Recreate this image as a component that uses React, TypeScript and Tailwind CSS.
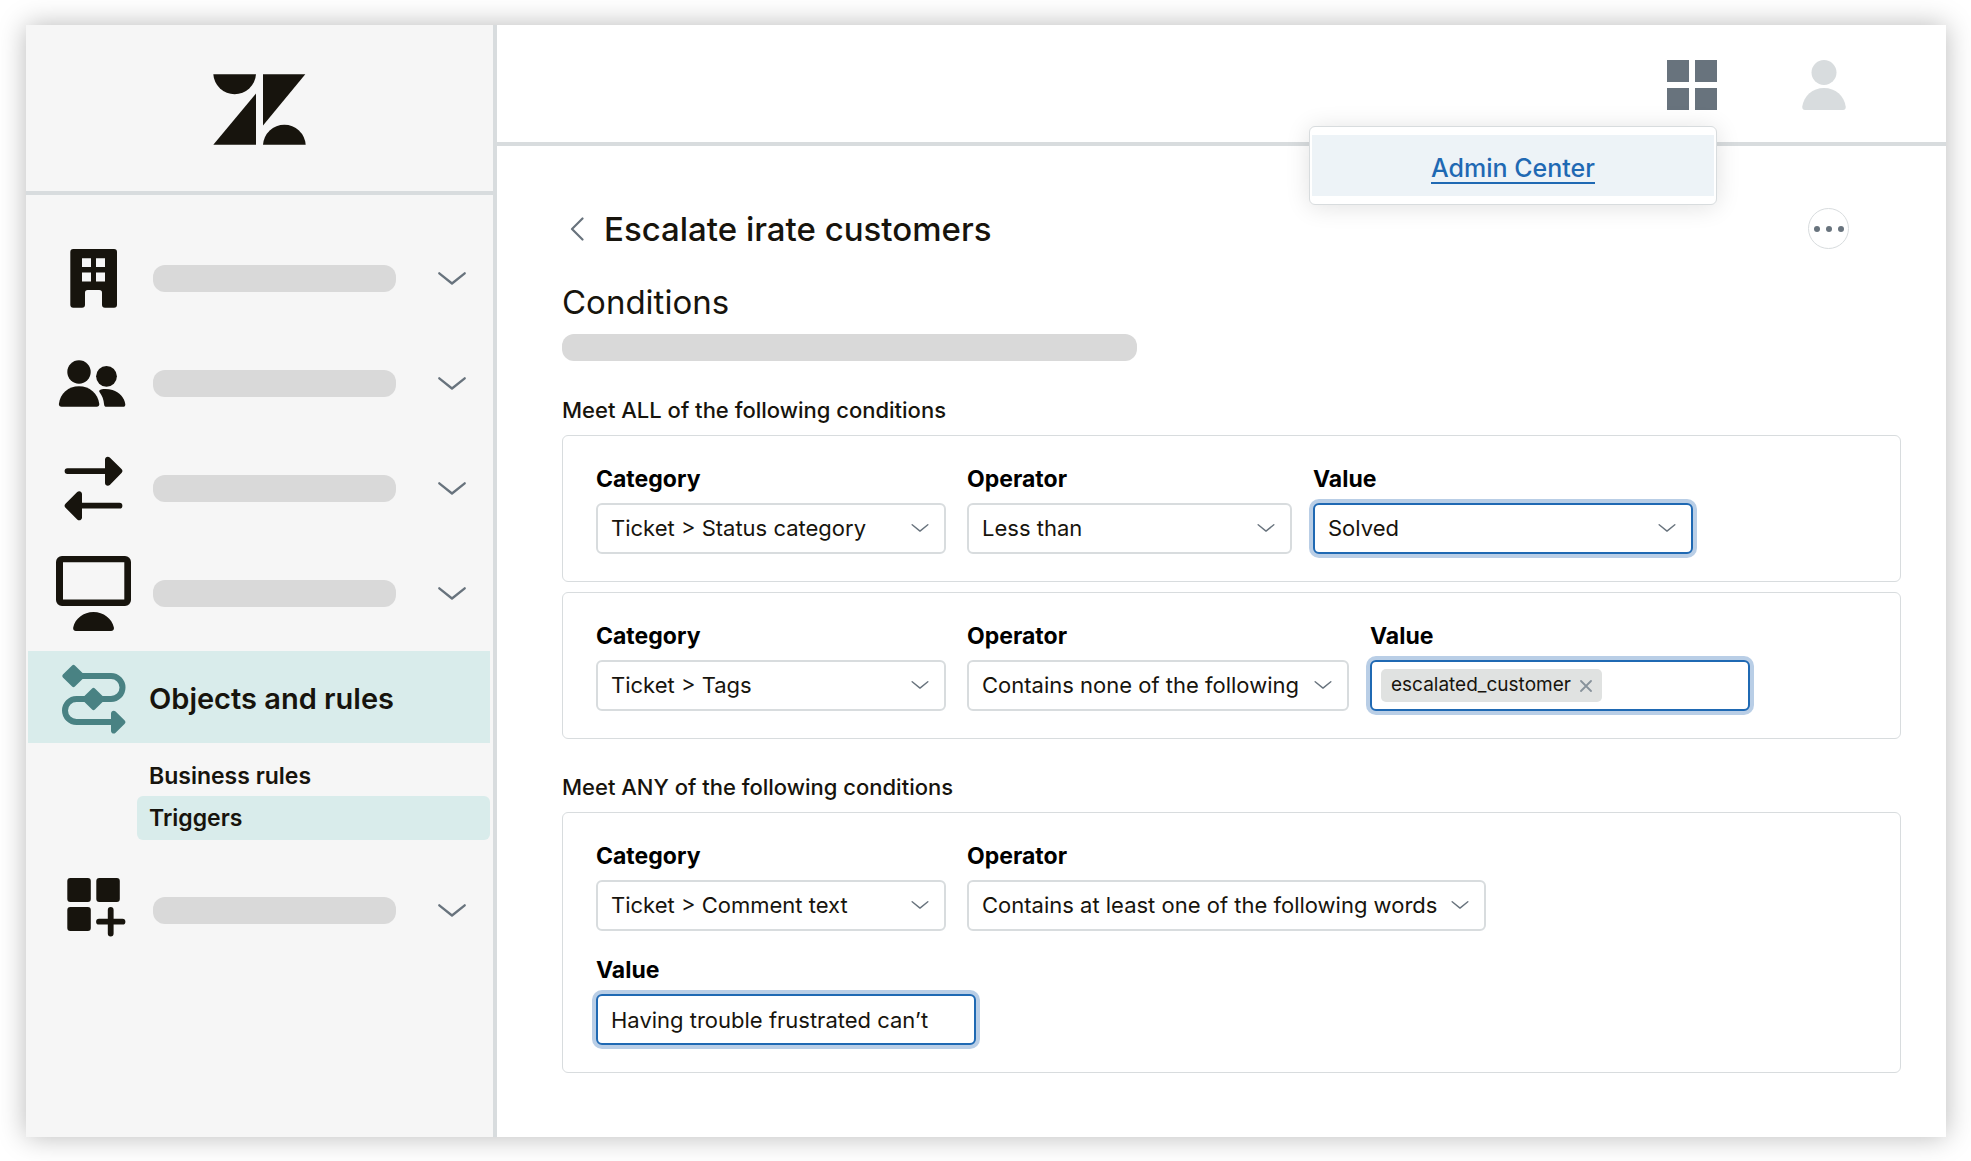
import React, { useState } from 'react';

type IconProps = { className?: string };

const Logo: React.FC<IconProps> = ({ className }) => (
  <svg viewBox="0 0 93 71" className={className} fill="currentColor" aria-hidden="true">
    <path d="M0.3 0.3H43A21.4 21.4 0 0 1 0.3 0.3Z" />
    <path d="M43 19.5V70.7H0.3Z" />
    <path d="M50 0.3H92.3L50 51.5Z" />
    <path d="M50 70.7A21.4 21.4 0 0 1 92.7 70.7Z" />
  </svg>
);

const BuildingIcon: React.FC<IconProps> = ({ className }) => (
  <svg viewBox="0 0 75 75" className={className} fill="currentColor" fillRule="evenodd" aria-hidden="true">
    <path d="M17.3 8H58a3 3 0 0 1 3 3V63.7a3 3 0 0 1-3 3H49a3 3 0 0 1-3-3V51.7a2.7 2.7 0 0 0-2.7-2.7H31.7a2.7 2.7 0 0 0-2.7 2.7V63.7a3 3 0 0 1-3 3H17.3a3 3 0 0 1-3-3V11a3 3 0 0 1 3-3ZM26 17.2V26H35V17.2ZM40 17.2V26H49V17.2ZM26 31.5V40.5H35V31.5ZM40 31.5V40.5H49V31.5Z" />
  </svg>
);

const PeopleIcon: React.FC<IconProps> = ({ className }) => (
  <svg viewBox="0 0 75 75" className={className} fill="currentColor" aria-hidden="true">
    <circle cx="23" cy="26" r="11.7" />
    <circle cx="50.5" cy="30.3" r="10.4" />
    <path d="M5.5 60.8C3.8 60.8 2.8 59.6 2.9 58C4 47.5 12.4 40.3 23 40.3S42 47.5 43.3 58C43.4 59.6 42.4 60.8 40.7 60.8Z" />
    <path d="M45 43.4C49 42.5 53 43 56.5 44.1C63.5 46.3 68.5 52 69.3 58.2C69.5 59.8 68.5 60.8 67 60.8H50.5C49 60.8 48.2 60 48.1 58.5C47.7 53.5 46.2 49.8 43.6 46.3C42.7 45 43.4 43.8 45 43.4Z" />
  </svg>
);

const ArrowsIcon: React.FC<IconProps> = ({ className }) => (
  <svg viewBox="0 0 75 75" className={className} fill="currentColor" aria-hidden="true">
    <path d="M11.5 17.2H49V8.5C49 5.9 52 4.7 53.8 6.5L65.5 18.1a2.9 2.9 0 0 1 0 4L53.8 34C52 35.7 49 34.5 49 32V23H11.5a2.9 2.9 0 0 1 0-5.8Z" />
    <path d="M63.5 51.8H26V43C26 40.4 23 39.2 21.2 41L9.5 52.7a2.9 2.9 0 0 0 0 4L21.2 68.5C23 70.3 26 69 26 66.5V57.6H63.5a2.9 2.9 0 0 0 0-5.8Z" />
  </svg>
);

const MonitorIcon: React.FC<IconProps> = ({ className }) => (
  <svg viewBox="0 0 75 75" className={className} fill="currentColor" fillRule="evenodd" aria-hidden="true">
    <path d="M6 0H69a6 6 0 0 1 6 6V44a6 6 0 0 1-6 6H6a6 6 0 0 1-6-6V6A6 6 0 0 1 6 0ZM7 6.2V43.6H68.3V6.2Z" />
    <path d="M20 75C18 75 16.8 73.5 17.2 71.5C19 62.5 27.5 56 37.5 56S56 62.5 57.9 71.5C58.3 73.5 57 75 55 75Z" />
  </svg>
);

const RulesIcon: React.FC<IconProps> = ({ className }) => (
  <svg viewBox="0 0 75 75" className={className} fill="none" aria-hidden="true">
    <path d="M24 16H55a11.5 11.5 0 0 1 0 23H20.5a11.5 11.5 0 0 0 0 23H57" stroke="currentColor" strokeWidth="6" />
    <g fill="currentColor">
      <rect x="9" y="7.5" width="17" height="17" rx="2" transform="rotate(45 17.5 16)" />
      <rect x="29" y="30.5" width="17" height="17" rx="2" transform="rotate(45 37.5 39)" />
      <path d="M55 53.5C55 50.9 57.8 49.7 59.6 51.5L68.5 60.2a2.7 2.7 0 0 1 0 3.8L59.6 72.7C57.8 74.5 55 73.3 55 70.7Z" />
    </g>
  </svg>
);

const AppsIcon: React.FC<IconProps> = ({ className }) => (
  <svg viewBox="0 0 75 75" className={className} fill="currentColor" aria-hidden="true">
    <rect x="11.3" y="5" width="23.5" height="24" rx="3" />
    <rect x="40.3" y="5" width="23.5" height="24" rx="3" />
    <rect x="11.3" y="34" width="23.5" height="24" rx="3" />
    <path d="M54.7 37V60.5M43 48.7H66.5" stroke="currentColor" strokeWidth="5.8" strokeLinecap="round" />
  </svg>
);

const ChevronDown: React.FC<IconProps> = ({ className }) => (
  <svg viewBox="0 0 28 13" className={className} fill="none" stroke="currentColor" strokeWidth="2.3" strokeLinecap="round" strokeLinejoin="round" aria-hidden="true">
    <path d="M1.3 1.3L14 11.5L26.7 1.3" />
  </svg>
);

interface NavRowProps {
  label: string;
  icon: React.FC<IconProps>;
}

const NavRow: React.FC<NavRowProps> = ({ label, icon: Icon }) => (
  <button type="button" aria-label={label} className="flex h-[105px] w-full items-center pl-[30px] pr-[27px]">
    <Icon className="h-[75px] w-[75px]" />
    <span className="ml-[22px] h-[27px] w-[243px] rounded-xl bg-[#d9d9d9]" />
    <ChevronDown className="ml-auto h-[13px] w-7 text-[#68737d]" />
  </button>
);

const Sidebar: React.FC = () => (
  <aside className="w-[471px] shrink-0 border-r-4 border-[#d8dcde] bg-[#f6f6f6] text-[#17140d]">
    <div className="flex h-[170px] items-center justify-center border-b-4 border-[#d8dcde] pt-[3px]">
      <Logo className="h-[71px] w-[93px]" />
    </div>
    <nav className="pt-[31px]">
      <NavRow label="Account" icon={BuildingIcon} />
      <NavRow label="People" icon={PeopleIcon} />
      <NavRow label="Channels" icon={ArrowsIcon} />
      <NavRow label="Workspaces" icon={MonitorIcon} />
      <div className="ml-[2px] mr-[3px] mt-[5px]">
        <button type="button" className="flex h-[92px] w-full items-center gap-[18px] bg-[#d9eceb] pl-7 text-[29px] font-semibold">
          <RulesIcon className="h-[75px] w-[75px] text-[#498283]" />
          <span className="pt-1">Objects and rules</span>
        </button>
        <div className="ml-[109px] mt-[13px] text-[23px] font-semibold">
          <a href="#business-rules" className="flex h-10 items-center pl-3">Business rules</a>
          <a href="#triggers" className="flex h-11 items-center rounded-md bg-[#d9eceb] pl-3">Triggers</a>
        </div>
      </div>
      <div className="mt-[18px]">
        <NavRow label="Apps and integrations" icon={AppsIcon} />
      </div>
    </nav>
  </aside>
);

const TopBar: React.FC = () => (
  <header className="flex h-[121px] items-start justify-end gap-[85px] border-b-4 border-[#d8dcde] pr-[100px] pt-[35px]">
    <div className="relative">
      <button type="button" aria-label="Products" className="block text-[#68737d]">
        <svg viewBox="0 0 50 50" className="h-[50px] w-[50px]" fill="currentColor" aria-hidden="true">
          <path d="M0 0H22V22H0ZM28 0H50V22H28ZM0 28H22V50H0ZM28 28H50V50H28Z" />
        </svg>
      </button>
      <div className="absolute right-0 top-full mt-4 w-[408px] rounded-md border border-[#d8dcde] bg-white px-[2px] py-2 shadow-[0_2px_24px_rgba(0,0,0,0.12)]">
        <div className="flex h-[61px] items-center justify-center bg-[#edf3f7] pt-[6px]">
          <a href="#admin" className="border-b-2 border-[#1f69b3] text-[25px] leading-7 font-medium text-[#1f69b3]">Admin Center</a>
        </div>
      </div>
    </div>
    <button type="button" aria-label="Profile" className="block text-[#d8dcde]">
      <svg viewBox="0 0 44 50" className="h-[50px] w-11" fill="currentColor" aria-hidden="true">
        <circle cx="22" cy="12.5" r="12.5" />
        <path d="M3 50C1 50 0 48.7 0.3 46.5C1.8 36 10.5 28 22 28S42.2 36 43.7 46.5C44 48.7 43 50 41 50Z" />
      </svg>
    </button>
  </header>
);

interface FieldProps {
  id: string;
  label: string;
  className: string;
  children: React.ReactNode;
}

const Field: React.FC<FieldProps> = ({ id, label, className, children }) => (
  <div className={className}>
    <label htmlFor={id} className="mb-[9px] block text-[23px] leading-[30px] font-bold text-black">{label}</label>
    {children}
  </div>
);

const boxStyle = 'h-[51px] w-full rounded-md border-2 bg-white text-[22px] outline-none';
const idleStyle = 'border-[#d8dcde]';
const focusStyle = 'border-[#1f69b3] ring-4 ring-[#b9cee6]';

interface SelectFieldProps {
  id: string;
  label: string;
  option: string;
  className: string;
  focused?: boolean;
}

const SelectField: React.FC<SelectFieldProps> = ({ id, label, option, className, focused }) => (
  <Field id={id} label={label} className={className}>
    <div className="relative">
      <select id={id} className={`appearance-none pl-[13px] pr-9 ${boxStyle} ${focused ? focusStyle : idleStyle}`}>
        <option>{option}</option>
      </select>
      <ChevronDown className="pointer-events-none absolute right-[17px] top-[21px] h-2 w-[18px] text-[#68737d]" />
    </div>
  </Field>
);

const TagField: React.FC = () => {
  const [tags, setTags] = useState(['escalated_customer']);

  return (
    <Field id="tags-value" label="Value" className="w-[380px]">
      <div className={`flex items-center pl-[9px] pr-2 ${boxStyle} ${focusStyle}`}>
        {tags.map((tag) => (
          <span key={tag} className="flex h-[33px] shrink-0 items-center gap-[9px] rounded-[5px] bg-[#e0e2e1] px-[10px] text-[19px]">
            {tag}
            <button type="button" aria-label={`Remove ${tag}`} onClick={() => setTags(tags.filter((t) => t !== tag))}>
              <svg viewBox="0 0 12 12" className="h-3 w-3 text-[#87929b]" fill="none" stroke="currentColor" strokeWidth="1.8" strokeLinecap="round" aria-hidden="true">
                <path d="M1 1L11 11M11 1L1 11" />
              </svg>
            </button>
          </span>
        ))}
        <input id="tags-value" type="text" className="min-w-0 flex-1 outline-none" />
      </div>
    </Field>
  );
};

const Card: React.FC<{ children: React.ReactNode }> = ({ children }) => (
  <div className="flex flex-wrap gap-x-[21px] gap-y-6 rounded-md border border-[#d8dcde] pb-[27px] pl-[33px] pr-8 pt-7">{children}</div>
);

const Trigger: React.FC = () => (
  <main className="pb-16 pl-[65px] pr-[45px] pt-[62px]">
    <div className="flex h-[41px] items-center">
      <a href="#triggers" aria-label="Back" className="ml-2 text-[#68737d]">
        <svg viewBox="0 0 14 24" className="h-6 w-[14px]" fill="none" stroke="currentColor" strokeWidth="2.2" strokeLinecap="round" strokeLinejoin="round" aria-hidden="true">
          <path d="M12.5 1.5L2 12L12.5 22.5" />
        </svg>
      </a>
      <h1 className="ml-5 text-[33px] leading-10 font-medium">Escalate irate customers</h1>
      <button type="button" aria-label="More actions" className="ml-auto mr-[52px] flex h-[41px] w-[41px] items-center justify-center gap-[6px] rounded-full border border-[#d8dcde]">
        <span className="h-[6px] w-[6px] rounded-full bg-[#68737d]" />
        <span className="h-[6px] w-[6px] rounded-full bg-[#68737d]" />
        <span className="h-[6px] w-[6px] rounded-full bg-[#68737d]" />
      </button>
    </div>

    <h2 className="mt-8 text-[33px] leading-[42px]">Conditions</h2>
    <div className="mt-[11px] h-[27px] w-[575px] rounded-xl bg-[#d9d9d9]" />

    <h3 className="mb-[10px] mt-[34px] text-[22px] leading-[30px] font-medium">Meet ALL of the following conditions</h3>
    <div className="flex flex-col gap-[10px]">
      <Card>
        <SelectField id="status-category" label="Category" option="Ticket > Status category" className="w-[350px]" />
        <SelectField id="status-operator" label="Operator" option="Less than" className="w-[325px]" />
        <SelectField id="status-value" label="Value" option="Solved" className="w-[380px]" focused />
      </Card>
      <Card>
        <SelectField id="tags-category" label="Category" option="Ticket > Tags" className="w-[350px]" />
        <SelectField id="tags-operator" label="Operator" option="Contains none of the following" className="w-[382px]" />
        <TagField />
      </Card>
    </div>

    <h3 className="mb-[10px] mt-[33px] text-[22px] leading-[30px] font-medium">Meet ANY of the following conditions</h3>
    <Card>
      <SelectField id="comment-category" label="Category" option="Ticket > Comment text" className="w-[350px]" />
      <SelectField id="comment-operator" label="Operator" option="Contains at least one of the following words" className="w-[519px]" />
      <div className="w-full">
        <Field id="comment-value" label="Value" className="w-[380px]">
          <input id="comment-value" type="text" defaultValue="Having trouble frustrated can’t" className={`px-[13px] ${boxStyle} ${focusStyle}`} />
        </Field>
      </div>
    </Card>
  </main>
);

const App: React.FC = () => (
  <div className="flex min-h-screen bg-white py-[25px] pl-[26px] pr-[25px] font-['Inter',sans-serif] text-[#17140d]">
    <div className="flex flex-1 bg-white shadow-[0_0_26px_rgba(0,0,0,0.28)]">
      <Sidebar />
      <div className="min-w-0 flex-1">
        <TopBar />
        <Trigger />
      </div>
    </div>
  </div>
);

export default App;
